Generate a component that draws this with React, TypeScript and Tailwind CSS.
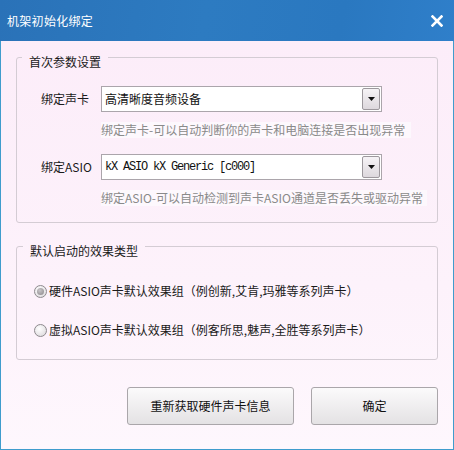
import React from "react";

const cjk = { fontFamily: '"Noto Sans CJK SC", "Noto Sans", sans-serif' };

function Combo({ text, mono }: { text: string; mono?: boolean }) {
  return (
    <div className="w-[281px] h-[26px] bg-white border border-[#aba5ab] flex items-center">
      <span
        className={mono ? "pl-[3px] text-[12px] tracking-[-1.2px] text-[#111] leading-[16px]" : "pl-[3px] text-[12px] text-[#111] leading-[16px]"}
        style={mono ? { fontFamily: '"Liberation Mono", "DejaVu Sans Mono", monospace' } : undefined}
      >
        {text}
      </span>
      <div className="ml-auto mr-[1px] w-[18px] h-[22px] border border-[#9d989d] rounded-[2px] bg-[linear-gradient(#f6f3f6,#ddd8dd)] flex items-center justify-center">
        <svg width="7" height="4" viewBox="0 0 7 4">
          <polygon points="0,0 7,0 3.5,4" fill="#111" />
        </svg>
      </div>
    </div>
  );
}

function Radio({ checked, text }: { checked?: boolean; text: string }) {
  return (
    <div className="flex items-center h-[16px]">
      <div className="w-[13px] h-[13px] rounded-full border border-[#8e8a8e] bg-[radial-gradient(circle_at_40%_35%,#ffffff,#d8d5d8)] flex items-center justify-center">
        {checked && <div className="w-[7px] h-[7px] rounded-full bg-[radial-gradient(circle_at_40%_35%,#c8c5c8,#8a878a)]" />}
      </div>
      <span className="ml-[2px] text-[12px] leading-[16px] text-[#1a1a1a]">{text}</span>
    </div>
  );
}

export default function App() {
  return (
    <div className="w-[454px] h-[450px] flex flex-col overflow-hidden" style={cjk}>
      <div className="h-[41px] shrink-0 flex items-center pl-[7px] pr-[11px] bg-[linear-gradient(100deg,#2a72b8_0%,#2d7bc1_45%,#2a78c0_75%,#2f7fca_100%)]">
        <span className="text-white text-[12px] tracking-[0.3px] leading-[16px] pt-[1px]">机架初始化绑定</span>
        <svg className="ml-auto" width="12" height="12" viewBox="0 0 12 12">
          <path d="M1.5 1.5 L10.5 10.5 M10.5 1.5 L1.5 10.5" stroke="#fff" strokeWidth="2.6" strokeLinecap="square" />
        </svg>
      </div>
      <div className="flex-1 flex flex-col border-l border-r border-b border-[#3f9ccd] bg-[linear-gradient(180deg,#fcedf9_0%,#fdf2fb_60%,#fef7fd_100%)] px-[15px]">
        <fieldset className="mt-[4px] border border-[#d4ccd4] rounded-[3px] pb-[22px]">
          <legend className="ml-[5px] px-[7px] pt-[10px] text-[12px] leading-[14px] text-[#1a1a1a]">首次参数设置</legend>
          <div className="pl-[24px]">
            <div className="mt-[17px] flex items-center">
              <span className="w-[60px] text-[12px] leading-[16px] text-[#1a1a1a]">绑定声卡</span>
              <Combo text="高清晰度音频设备" />
            </div>
            <div className="pl-[60px] mt-[4px] h-[16px]">
              <span className="inline-block bg-[#fdf8fd] pr-[6px] text-[12px] leading-[16px] text-[#8a8a8a]">
                绑定声卡-可以自动判断你的声卡和电脑连接是否出现异常
              </span>
            </div>
            <div className="mt-[22px] flex items-center">
              <span className="w-[60px] text-[12px] leading-[16px] text-[#1a1a1a]">绑定ASIO</span>
              <Combo text="kX ASIO kX Generic [c000]" mono />
            </div>
            <div className="pl-[60px] mt-[4px] h-[16px]">
              <span className="inline-block bg-[#fdf8fd] pr-[4px] text-[12px] leading-[16px] text-[#8a8a8a]">
                绑定ASIO-可以自动检测到声卡ASIO通道是否丢失或驱动异常
              </span>
            </div>
          </div>
        </fieldset>
        <fieldset className="mt-[11px] border border-[#d4ccd4] rounded-[3px] pb-[21px]">
          <legend className="ml-[6px] px-[7px] pt-[10px] text-[12px] leading-[14px] text-[#1a1a1a]">默认启动的效果类型</legend>
          <div className="pl-[17px]">
            <div className="mt-[25px]">
              <Radio checked text="硬件ASIO声卡默认效果组（例创新,艾肯,玛雅等系列声卡）" />
            </div>
            <div className="mt-[23px]">
              <Radio text="虚拟ASIO声卡默认效果组（例客所思,魅声,全胜等系列声卡）" />
            </div>
          </div>
        </fieldset>
        <div className="mt-[27px] flex justify-end gap-[17px]">
          <button className="w-[167px] h-[38px] border border-[#aaa6aa] rounded-[3px] bg-[linear-gradient(#fbfafb,#e4e2e4)] text-[12px] text-[#111]">
            重新获取硬件声卡信息
          </button>
          <button className="w-[127px] h-[38px] border border-[#aaa6aa] rounded-[3px] bg-[linear-gradient(#fbfafb,#e4e2e4)] text-[12px] text-[#111]">
            确定
          </button>
        </div>
      </div>
    </div>
  );
}
